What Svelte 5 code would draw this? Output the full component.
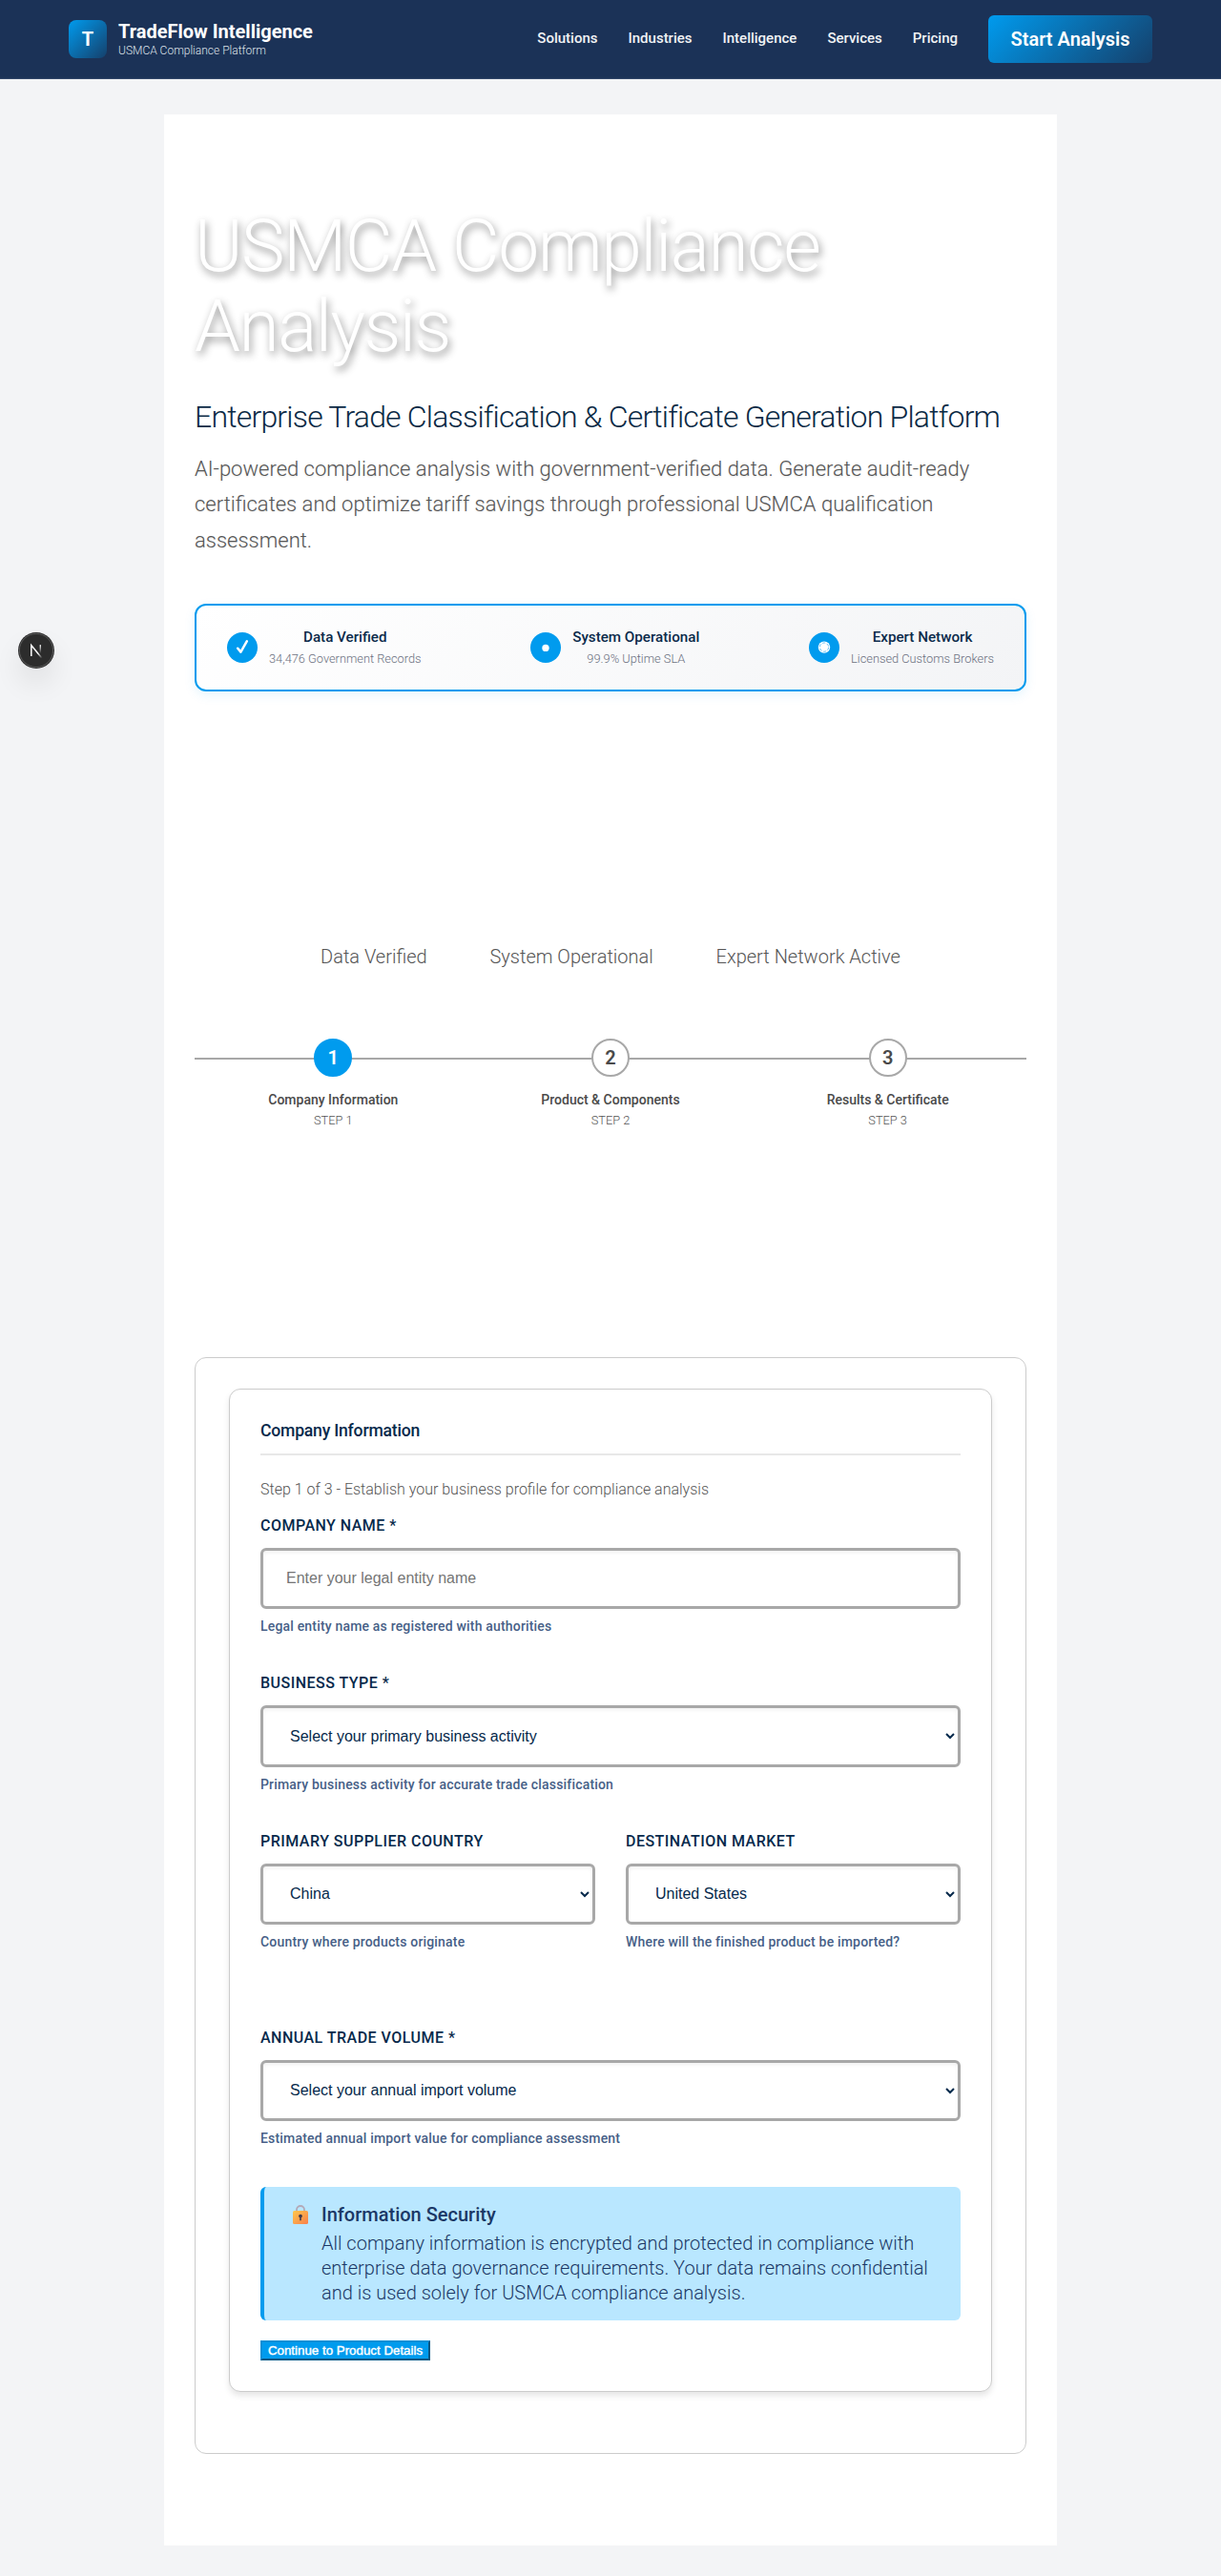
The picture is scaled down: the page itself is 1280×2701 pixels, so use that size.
<script>
  const links = ['Solutions', 'Industries', 'Intelligence', 'Services', 'Pricing'];
  const statuses = [
    { icon: 'check', title: 'Data Verified', note: '34,476 Government Records' },
    { icon: 'dot', title: 'System Operational', note: '99.9% Uptime SLA' },
    { icon: 'ring', title: 'Expert Network', note: 'Licensed Customs Brokers' }
  ];
  const trust = ['Data Verified', 'System Operational', 'Expert Network Active'];
  const steps = ['Company Information', 'Product & Components', 'Results & Certificate'];
</script>

<header>
  <div class="bar">
    <div class="brand">
      <div class="logo">T</div>
      <div>
        <div class="name">TradeFlow Intelligence</div>
        <div class="sub">USMCA Compliance Platform</div>
      </div>
    </div>
    <nav>
      {#each links as l}<a href="#top">{l}</a>{/each}
      <button class="cta">Start Analysis</button>
    </nav>
  </div>
</header>

<main>
  <h1>USMCA Compliance Analysis</h1>
  <h2 class="tagline">Enterprise Trade Classification &amp; Certificate Generation Platform</h2>
  <p class="lead">AI-powered compliance analysis with government-verified data. Generate audit-ready certificates and optimize tariff savings through professional USMCA qualification assessment.</p>

  <div class="status">
    {#each statuses as s}
      <div class="item">
        <svg width="32" height="32" viewBox="0 0 32 32">
          <circle cx="16" cy="16" r="16" fill="#009bee" />
          {#if s.icon === 'check'}
            <path d="M11.2 16.8 L14.4 20.6 L20.8 9.4" fill="none" stroke="#fff" stroke-width="2.5" stroke-linecap="round" stroke-linejoin="round" />
          {:else if s.icon === 'dot'}
            <circle cx="16" cy="16.4" r="3.7" fill="#fff" />
          {:else}
            <circle cx="16" cy="15.6" r="6.2" fill="#fff" />
            <circle cx="16" cy="15.6" r="4.6" fill="none" stroke="#009bee" stroke-width=".6" stroke-dasharray="3.2 1.6" />
          {/if}
        </svg>
        <div class="text">
          <div class="title">{s.title}</div>
          <div class="small">{s.note}</div>
        </div>
      </div>
    {/each}
  </div>

  <div class="trust">{#each trust as t}<span>{t}</span>{/each}</div>

  <div class="steps">
    {#each steps as s, i}
      <div class="step" class:active={i === 0}>
        <div class="num">{i + 1}</div>
        <div class="label">{s}</div>
        <div class="count">STEP {i + 1}</div>
      </div>
    {/each}
  </div>

  <section class="panel">
    <div class="card">
      <h3>Company Information</h3>
      <p class="intro">Step 1 of 3 - Establish your business profile for compliance analysis</p>
      <div class="field first">
        <label for="name">COMPANY NAME *</label>
        <input id="name" placeholder="Enter your legal entity name" />
        <div class="help">Legal entity name as registered with authorities</div>
      </div>
      <div class="field">
        <label for="type">BUSINESS TYPE *</label>
        <select id="type"><option>Select your primary business activity</option></select>
        <div class="help">Primary business activity for accurate trade classification</div>
      </div>
      <div class="row">
        <div class="field">
          <label for="origin">PRIMARY SUPPLIER COUNTRY</label>
          <select id="origin"><option>China</option></select>
          <div class="help">Country where products originate</div>
        </div>
        <div class="field">
          <label for="dest">DESTINATION MARKET</label>
          <select id="dest"><option>United States</option></select>
          <div class="help">Where will the finished product be imported?</div>
        </div>
      </div>
      <div class="field">
        <label for="volume">ANNUAL TRADE VOLUME *</label>
        <select id="volume"><option>Select your annual import volume</option></select>
        <div class="help">Estimated annual import value for compliance assessment</div>
      </div>
      <div class="note">
        <svg class="lock" width="16" height="20" viewBox="0 0 16 20">
          <defs>
            <linearGradient id="body" x1="0" y1="0" x2="1" y2="1">
              <stop offset="0" stop-color="#fdc84b" />
              <stop offset="1" stop-color="#f97f4c" />
            </linearGradient>
          </defs>
          <path d="M4 8 V5 A4 4 0 0 1 12 5 V8" fill="none" stroke="#b3a9b8" stroke-width="1.8" />
          <rect x="0" y="6" width="16" height="14" rx="1.6" fill="url(#body)" />
          <circle cx="8" cy="11.6" r="1.9" fill="#433b4d" />
          <path d="M7.2 12 H8.8 V16.2 H7.2 Z" fill="#433b4d" />
        </svg>
        <div>
          <div class="note-title">Information Security</div>
          <p>All company information is encrypted and protected in compliance with enterprise data governance requirements. Your data remains confidential and is used solely for USMCA compliance analysis.</p>
        </div>
      </div>
      <button class="next">Continue to Product Details</button>
    </div>
  </section>
</main>

<div class="badge">
  <svg width="38" height="38" viewBox="0 0 38 38">
    <defs>
      <linearGradient id="diag" x1="15" y1="14" x2="25" y2="27" gradientUnits="userSpaceOnUse">
        <stop offset=".6" stop-color="#fff" />
        <stop offset="1" stop-color="#fff" stop-opacity="0" />
      </linearGradient>
      <linearGradient id="stem" x1="0" y1="13" x2="0" y2="22" gradientUnits="userSpaceOnUse">
        <stop offset="0" stop-color="#fff" />
        <stop offset="1" stop-color="#fff" stop-opacity="0" />
      </linearGradient>
    </defs>
    <circle cx="19" cy="19" r="19" fill="#2c2c2c" />
    <circle cx="19" cy="19" r="17.6" fill="none" stroke="#5c5c5c" stroke-width="1" />
    <path d="M13.8 25 V13.6 L25 27.2" fill="none" stroke="url(#diag)" stroke-width="1.5" />
    <rect x="22.6" y="13.2" width="1.4" height="9" fill="url(#stem)" />
  </svg>
</div>

<style>
  :global(body) { background: #f3f4f6; }
  header, main { font-family: Roboto, sans-serif; }
  h1, h2, h3, p { margin: 0; }

  header { height: 83px; box-sizing: border-box; background: #1b3257; border-bottom: 1px solid #324769; }
  .bar { width: 1136px; height: 82px; margin: 0 auto; display: flex; align-items: center; justify-content: space-between; }
  .brand { display: flex; align-items: center; gap: 12px; }
  .logo { width: 40px; height: 40px; line-height: 40px; border-radius: 8px; background: linear-gradient(135deg, #009bee, #15406b); color: #fff; font-size: 20px; font-weight: 700; text-align: center; }
  .name { font-size: 20px; font-weight: 700; line-height: 24px; color: #fff; }
  .sub { font-size: 12px; font-weight: 300; line-height: 16px; color: #dde1e7; }
  nav { display: flex; align-items: center; gap: 32px; }
  nav a { color: #f1f3f5; text-decoration: none; font-size: 15px; font-weight: 500; line-height: 24px; padding-bottom: 2px; }
  .cta { width: 172px; height: 50px; padding: 0; border: 0; border-radius: 6px; background: linear-gradient(135deg, #009bee, #15406b); color: #fff; font: 600 20px/50px Roboto, sans-serif; }

  main { width: 872px; margin: 37px auto 32px; padding: 96px 32px; background: #fff; }
  h1 { font-size: 76.8px; font-weight: 300; line-height: 84.48px; letter-spacing: -0.02em; color: #fff; text-shadow: 2px 4px 8px rgba(0, 0, 0, .45); }
  .tagline { margin-top: 32px; font-size: 32px; font-weight: 300; line-height: 40px; letter-spacing: -0.025em; color: #0b2a45; white-space: nowrap; }
  .lead { margin-top: 16px; font-size: 22px; font-weight: 300; line-height: 37.4px; color: #555; text-shadow: 0 1px 2px rgba(0, 0, 0, .1); }

  .status { height: 92px; box-sizing: border-box; margin-top: 48px; padding: 0 32px; display: flex; align-items: center; justify-content: space-between; border: 2px solid #009bee; border-radius: 12px; background: linear-gradient(135deg, #fff, #f3f4f6); box-shadow: 0 4px 12px rgba(0, 155, 238, .1); }
  .item { display: flex; align-items: center; gap: 12px; }
  .text { text-align: center; }
  .title { font-size: 15.2px; font-weight: 500; line-height: 23px; color: #0b2a4a; }
  .small { font-size: 12.8px; font-weight: 300; line-height: 22px; color: #6b7080; }

  .trust { margin-top: 263px; display: flex; justify-content: center; gap: 65.8px; font-size: 20px; font-weight: 300; line-height: 30px; color: #555; }

  .steps { margin-top: 71px; display: grid; grid-template-columns: repeat(3, 1fr); background: linear-gradient(#a8a8a8, #a8a8a8) 0 20px / 100% 2px no-repeat; }
  .step { text-align: center; }
  .num { width: 40px; height: 40px; box-sizing: border-box; margin: 0 auto 14px; border: 2px solid #a8a8a8; border-radius: 50%; background: #fff; color: #4a4a4a; font-size: 20px; font-weight: 600; line-height: 36px; }
  .active .num { border-color: #009bee; background: #009bee; color: #fff; }
  .label { font-size: 14px; font-weight: 500; line-height: 20px; margin-bottom: 3px; color: #4a4a4a; }
  .count { font-size: 12.8px; font-weight: 300; line-height: 18px; color: #555; }

  .panel { margin-top: 239px; padding: 32px 0 64px; border: 1px solid #ccc; border-radius: 12px; }
  .card { width: 800px; box-sizing: border-box; margin: 0 auto; padding: 32px; border: 1px solid #ccc; border-radius: 12px; background: #fff; box-shadow: 0 4px 6px rgba(0, 0, 0, .1); }
  h3 { padding-bottom: 13px; border-bottom: 2px solid #e8e8e8; font-size: 17.6px; font-weight: 500; line-height: 22px; letter-spacing: -0.012em; color: #06294b; }
  .intro { margin: 23px 0 13px; font-size: 16px; font-weight: 300; line-height: 26px; color: #555; }
  .field { margin-bottom: 36.8px; }
  .first { margin-bottom: 37.2px; }
  .row { display: grid; grid-template-columns: 1fr 1fr; gap: 32px; margin-bottom: 40.6px; }
  label { display: block; margin-bottom: 12px; font-size: 16px; font-weight: 500; line-height: 23px; letter-spacing: .48px; color: #06294b; }
  input, select { display: block; width: 100%; height: 64.5px; box-sizing: border-box; padding: 0 24px; border: 3px solid #a8a8a8; border-radius: 6px; background: #fff; color: #06294b; font: 400 16px "Liberation Sans", Arial, sans-serif; box-shadow: inset 0 2px 4px rgba(0, 0, 0, .06); }
  input { height: 64px; }
  select { padding: 0 0 0 24px; }
  .help { margin-top: 8px; font-size: 14px; font-weight: 500; line-height: 21px; letter-spacing: .18px; color: #475f87; }

  .note { margin-top: 40px; height: 140px; box-sizing: border-box; padding: 16px 24px; display: flex; gap: 14px; border-left: 4px solid #009bee; border-radius: 6px; background: #b9e7ff; color: #1b3866; }
  .lock { margin: 3px 0 0 6px; flex: none; }
  .note-title { font-size: 20px; font-weight: 500; line-height: 26px; margin-bottom: 4px; }
  .note p { font-size: 20px; font-weight: 300; line-height: 26px; }
  .next { display: block; width: 178px; height: 21px; margin-top: 21px; padding: 0; border: 2px outset #0d8fd6; background: #009bee; color: #fff; font: 500 13.333px/15px "Liberation Sans", Arial, sans-serif; -webkit-text-stroke: .4px #fff; }

  .badge { position: fixed; left: 19px; top: 663px; width: 38px; height: 38px; border-radius: 50%; box-shadow: 0 16px 32px -8px rgba(0, 0, 0, .24); }
  .badge svg { display: block; }
</style>
